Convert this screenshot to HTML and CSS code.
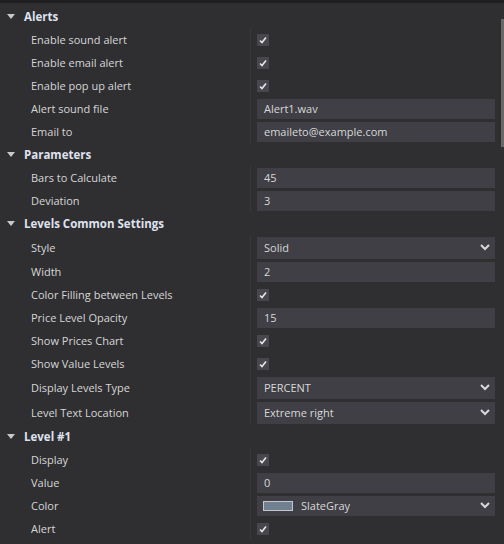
FILE: index.html
```html
<!DOCTYPE html>
<html lang="en">
<head>
    <meta charset="UTF-8">
    <title>Properties</title>
    <link rel="stylesheet" href="styles.css">
</head>
<body>
    <div class="props">
        <div class="scroll-thumb"></div>

        <div class="row head"><span class="caret"></span>Alerts</div>
        <div class="row"><div class="name">Enable sound alert</div><div class="value"><span class="check"><svg width="12" height="12" viewBox="0 0 12 12"><path d="M3 6.5 L5 8.5 L9 3.5" /></svg></span></div></div>
        <div class="row"><div class="name">Enable email alert</div><div class="value"><span class="check"><svg width="12" height="12" viewBox="0 0 12 12"><path d="M3 6.5 L5 8.5 L9 3.5" /></svg></span></div></div>
        <div class="row"><div class="name">Enable pop up alert</div><div class="value"><span class="check"><svg width="12" height="12" viewBox="0 0 12 12"><path d="M3 6.5 L5 8.5 L9 3.5" /></svg></span></div></div>
        <div class="row"><div class="name">Alert sound file</div><div class="value"><div class="field">Alert1.wav</div></div></div>
        <div class="row"><div class="name">Email to</div><div class="value"><div class="field">emaileto@example.com</div></div></div>

        <div class="row head"><span class="caret"></span>Parameters</div>
        <div class="row"><div class="name">Bars to Calculate</div><div class="value"><div class="field">45</div></div></div>
        <div class="row"><div class="name">Deviation</div><div class="value"><div class="field">3</div></div></div>

        <div class="row head"><span class="caret"></span>Levels Common Settings</div>
        <div class="row tall"><div class="name">Style</div><div class="value"><div class="field select">Solid<svg class="chev" width="10" height="7" viewBox="0 0 10 7"><path d="M1 1 L5 5 L9 1" /></svg></div></div></div>
        <div class="row"><div class="name">Width</div><div class="value"><div class="field">2</div></div></div>
        <div class="row"><div class="name">Color Filling between Levels</div><div class="value"><span class="check"><svg width="12" height="12" viewBox="0 0 12 12"><path d="M3 6.5 L5 8.5 L9 3.5" /></svg></span></div></div>
        <div class="row"><div class="name">Price Level Opacity</div><div class="value"><div class="field">15</div></div></div>
        <div class="row"><div class="name">Show Prices Chart</div><div class="value"><span class="check"><svg width="12" height="12" viewBox="0 0 12 12"><path d="M3 6.5 L5 8.5 L9 3.5" /></svg></span></div></div>
        <div class="row"><div class="name">Show Value Levels</div><div class="value"><span class="check"><svg width="12" height="12" viewBox="0 0 12 12"><path d="M3 6.5 L5 8.5 L9 3.5" /></svg></span></div></div>
        <div class="row tall"><div class="name">Display Levels Type</div><div class="value"><div class="field select">PERCENT<svg class="chev" width="10" height="7" viewBox="0 0 10 7"><path d="M1 1 L5 5 L9 1" /></svg></div></div></div>
        <div class="row tall"><div class="name">Level Text Location</div><div class="value"><div class="field select">Extreme right<svg class="chev" width="10" height="7" viewBox="0 0 10 7"><path d="M1 1 L5 5 L9 1" /></svg></div></div></div>

        <div class="row head"><span class="caret"></span>Level #1</div>
        <div class="row"><div class="name">Display</div><div class="value"><span class="check"><svg width="12" height="12" viewBox="0 0 12 12"><path d="M3 6.5 L5 8.5 L9 3.5" /></svg></span></div></div>
        <div class="row"><div class="name">Value</div><div class="value"><div class="field">0</div></div></div>
        <div class="row"><div class="name">Color</div><div class="value"><div class="field select"><span class="swatch"></span>SlateGray<svg class="chev" width="10" height="7" viewBox="0 0 10 7"><path d="M1 1 L5 5 L9 1" /></svg></div></div></div>
        <div class="row"><div class="name">Alert</div><div class="value"><span class="check"><svg width="12" height="12" viewBox="0 0 12 12"><path d="M3 6.5 L5 8.5 L9 3.5" /></svg></span></div></div>
    </div>
</body>
</html>
```

FILE: styles.css
```css
* {
    box-sizing: border-box;
}
html, body {
    margin: 0;
    background: #2f2f32;
}
body {
    font-family: "Open Sans", "Noto Sans", sans-serif;
    font-size: 11px;
    line-height: 15px;
    color: #d6d6d6;
}
.props {
    position: relative;
    border-top: 3px solid #1f1f20;
    padding-top: 2px;
    height: 544px;
    overflow: hidden;
}
.scroll-thumb {
    position: absolute;
    top: 16px;
    right: 0;
    width: 3px;
    height: 128px;
    background: #686868;
}
.row {
    display: grid;
    grid-template-columns: 250px 1fr;
    grid-template-rows: 23px;
    height: 23px;
}
.row.tall {
    grid-template-rows: 25px;
    height: 25px;
}
.name {
    display: flex;
    align-items: center;
    padding-left: 31px;
    white-space: nowrap;
}
.value {
    display: flex;
    align-items: center;
    border-left: 1px solid #38383c;
    padding: 0 9px 0 6px;
}
.head {
    display: flex;
    align-items: center;
    padding-left: 7px;
    font-size: 11.5px;
    font-weight: bold;
    color: #dfe2ee;
}
.caret {
    width: 0;
    height: 0;
    border-left: 4.5px solid transparent;
    border-right: 4.5px solid transparent;
    border-top: 5px solid #c8c8c8;
    margin-right: 9px;
}
.field {
    flex: 1;
    height: 20px;
    display: flex;
    align-items: center;
    padding: 0 7px;
    background: #3f3f45;
    color: #d8d8d8;
    white-space: nowrap;
}
.row.tall .field {
    height: 22px;
}
.select .chev {
    margin-left: auto;
    margin-right: -2px;
}
.chev path {
    fill: none;
    stroke: #d8d8d8;
    stroke-width: 2;
}
.check {
    width: 12px;
    height: 12px;
    background: #47474d;
    display: flex;
}
.check path {
    fill: none;
    stroke: #e6e6e6;
    stroke-width: 1.6;
}
.swatch {
    width: 30px;
    height: 10px;
    background: #708090;
    border: 1px solid #c4c8cc;
    margin-right: 8px;
    margin-left: -1px;
    flex-shrink: 0;
}
```
